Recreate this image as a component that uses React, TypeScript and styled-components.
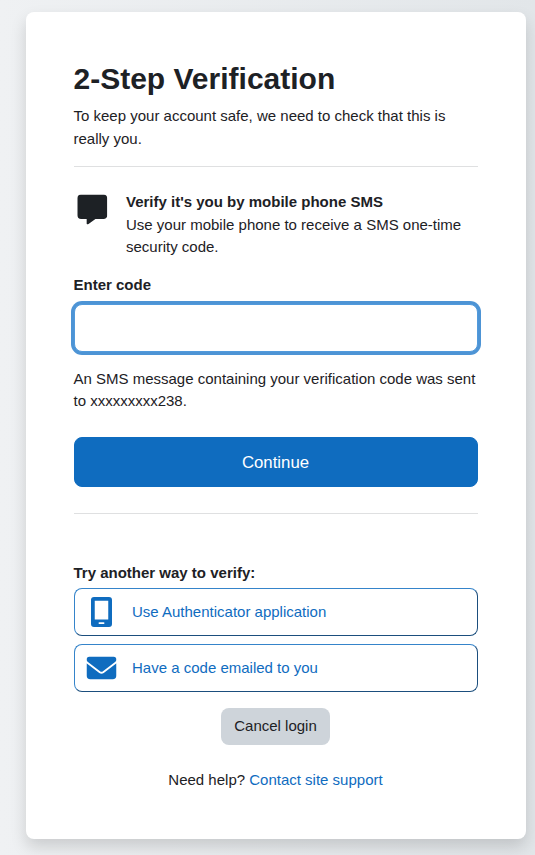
import React from 'react';
import styled, { createGlobalStyle } from 'styled-components';
import { FaMessage, FaEnvelope } from 'react-icons/fa6';

const GlobalStyle = createGlobalStyle`
  *, *::before, *::after { box-sizing: border-box; }
  body {
    margin: 0;
    font: 15px/22.5px "Liberation Sans", Arial, sans-serif;
    color: #1d2125;
  }
`;

const Page = styled.div`
  height: 855px;
  overflow: hidden;
  padding: 12px 9.5px 16px 25.5px;
  background: linear-gradient(to right, #eff1f3 0%, #e2e6e9 100%);
`;

const Card = styled.main`
  width: 500px;
  height: 827px;
  padding: 49px 48px 48px;
  background: #fff;
  border-radius: 8px;
  box-shadow: 0 8px 16px rgba(0, 0, 0, 0.15);
`;

const Title = styled.h1`
  margin: 0 0 8px;
  font-size: 30px;
  line-height: 36px;
  font-weight: 700;
`;

const Text = styled.p`
  margin: 0;
`;

const Divider = styled.hr<{ $top: number; $bottom: number }>`
  height: 1px;
  margin: ${p => p.$top}px 0 ${p => p.$bottom}px;
  border: 0;
  background: #dfe0e1;
`;

const Method = styled.section`
  display: flex;
  margin-bottom: 15px;
`;

const MethodIcon = styled.div`
  display: flex;
  flex: none;
  width: 37.5px;
  height: 36px;
  margin-right: 15px;
  align-items: center;
  justify-content: center;

  svg { transform: translate(0.3px, 0.5px); }
`;

const Strong = styled.div`
  font-weight: 700;
`;

const Label = styled.label`
  display: block;
  margin-bottom: 8px;
  font-weight: 700;
`;

const CodeInput = styled.input`
  display: block;
  width: 100%;
  height: 48px;
  margin-bottom: 15.5px;
  padding: 8px 16px;
  border: 1px solid #519adc;
  border-radius: 8px;
  outline: 0;
  box-shadow: 0 0 0 3px #4d94d5;
  font: inherit;
  caret-color: transparent;
`;

const ContinueButton = styled.button`
  display: block;
  width: 100%;
  height: 50px;
  margin-top: 24.5px;
  border: 1px solid #0f6cbf;
  border-radius: 8px;
  background: #0f6cbf;
  color: #fff;
  font: 16.8px/25px "Liberation Sans", Arial, sans-serif;
`;

const Options = styled.div`
  display: grid;
  gap: 8px;
  margin-top: 3px;
`;

const OptionButton = styled.button`
  display: flex;
  height: 48px;
  padding: 1px 7.5px 0;
  align-items: center;
  border: 1px solid;
  border-color: #3584ca #1b4e7d #1b4e7d #3584ca;
  border-radius: 8px;
  background: #fff;
  color: #0f6cbf;
  font: inherit;
`;

const OptionIcon = styled.span`
  display: flex;
  width: 38px;
  margin-right: 12px;
  justify-content: center;

  svg { transform: translateX(0.5px); }
`;

const Footer = styled.footer`
  display: flex;
  flex-direction: column;
  align-items: center;
  gap: 24px;
  margin-top: 16px;
`;

const CancelButton = styled.button`
  width: 109px;
  height: 37px;
  padding: 0;
  border: 0;
  border-radius: 8px;
  background: #ced4da;
  color: #1d2125;
  font: inherit;
`;

const Link = styled.a`
  color: #0f6cbf;
  text-decoration: none;
`;

function PhoneIcon() {
  return (
    <svg width="30" height="30" viewBox="0 0 30 30" fill="currentColor" fillRule="evenodd" aria-hidden="true">
      <path d="M7.5 0h15a3 3 0 0 1 3 3v24a3 3 0 0 1-3 3h-15a3 3 0 0 1-3-3V3a3 3 0 0 1 3-3ZM8.25 3.75v18.75h13.5V3.75Zm4.65 21.4a.9.9 0 0 0 0 1.8h4.2a.9.9 0 0 0 0-1.8Z" />
    </svg>
  );
}

export default function App() {
  return (
    <>
      <GlobalStyle />
      <Page>
        <Card>
          <Title>2-Step Verification</Title>
          <Text>To keep your account safe, we need to check that this is really you.</Text>
          <Divider $top={16} $bottom={24} />
          <Method>
            <MethodIcon><FaMessage size={30} /></MethodIcon>
            <div>
              <Strong>Verify it's you by mobile phone SMS</Strong>
              <Text>Use your mobile phone to receive a SMS one-time security code.</Text>
            </div>
          </Method>
          <Label htmlFor="code">Enter code</Label>
          <CodeInput id="code" type="text" />
          <Text>An SMS message containing your verification code was sent to xxxxxxxxx238.</Text>
          <ContinueButton type="button">Continue</ContinueButton>
          <Divider $top={26} $bottom={48} />
          <Strong>Try another way to verify:</Strong>
          <Options>
            <OptionButton type="button">
              <OptionIcon><PhoneIcon /></OptionIcon>
              Use Authenticator application
            </OptionButton>
            <OptionButton type="button">
              <OptionIcon><FaEnvelope size={30} /></OptionIcon>
              Have a code emailed to you
            </OptionButton>
          </Options>
          <Footer>
            <CancelButton type="button">Cancel login</CancelButton>
            <Text>Need help? <Link href="#support">Contact site support</Link></Text>
          </Footer>
        </Card>
      </Page>
    </>
  );
}
